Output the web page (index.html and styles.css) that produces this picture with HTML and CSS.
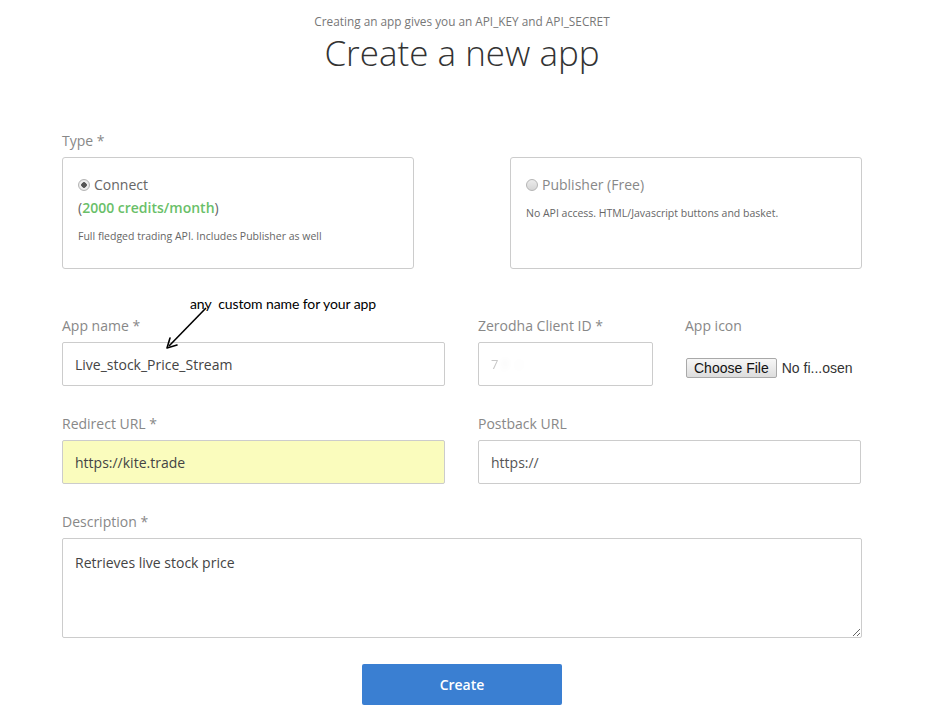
FILE: index.html
```html
<!DOCTYPE html>
<html>
<head>
<meta charset="utf-8">
<title>Create a new app</title>
<link rel="stylesheet" href="styles.css">
</head>
<body>
<main class="page">
  <p class="sub">Creating an app gives you an API_KEY and API_SECRET</p>
  <h1 class="title">Create a new app</h1>

  <form class="form">
    <div class="label">Type *</div>
    <div class="types">
      <div class="card">
        <div class="opt"><span class="radio checked"></span>Connect</div>
        <div class="credits">(<b>2000 credits/month</b>)</div>
        <p class="desc desc-connect">Full fledged trading API. Includes Publisher as well</p>
      </div>
      <div class="card">
        <div class="opt opt-off"><span class="radio"></span>Publisher (Free)</div>
        <p class="desc desc-pub">No API access. HTML/Javascript buttons and basket.</p>
      </div>
    </div>

    <div class="row">
      <div class="field">
        <div class="label">App name *</div>
        <input class="input" type="text" value="Live_stock_Price_Stream">
      </div>
      <div class="split">
        <div class="field">
          <div class="label">Zerodha Client ID *</div>
          <div class="input blurred"><span>7</span></div>
        </div>
        <div class="field">
          <div class="label">App icon</div>
          <div class="file">
            <span class="file-btn">Choose File</span>
            <span class="file-name">No fi...osen</span>
          </div>
        </div>
      </div>
    </div>

    <div class="row">
      <div class="field">
        <div class="label">Redirect URL *</div>
        <input class="input autofill" type="text" value="https://kite.trade">
      </div>
      <div class="field">
        <div class="label">Postback URL</div>
        <input class="input" type="text" placeholder="https://">
      </div>
    </div>

    <div class="field field-full">
      <div class="label">Description *</div>
      <textarea class="input area">Retrieves live stock price</textarea>
    </div>

    <div class="actions">
      <button type="button" class="btn">Create</button>
    </div>
  </form>

  <div class="note">any&nbsp; custom name for your app</div>
  <svg class="arrow" width="50" height="50" viewBox="0 0 50 50">
    <line x1="44" y1="3" x2="7" y2="41" stroke="#000" stroke-width="1.6"/>
    <path d="M5 43 L8 33 M5 43 L15 40" stroke="#000" stroke-width="1.6" fill="none" stroke-linecap="round"/>
  </svg>
</main>
</body>
</html>
```

FILE: styles.css
```css
* { box-sizing: border-box; }

html, body {
  margin: 0;
  padding: 0;
  background: #fff;
}

body {
  font-family: "Open Sans", "Liberation Sans", sans-serif;
  color: #444;
}

.page {
  position: relative;
  width: 800px;
  margin-left: 62px;
  padding-top: 13px;
}

.sub {
  margin: 0;
  text-align: center;
  font-size: 11.8px;
  line-height: 16px;
  color: #777;
}

.title {
  margin: 0;
  text-align: center;
  font-size: 35px;
  font-weight: 300;
  line-height: 48px;
  color: #333;
}

.form {
  margin-top: 54px;
}

.label {
  font-size: 14px;
  line-height: 20px;
  color: #888;
  margin-bottom: 6px;
}

.types {
  display: flex;
  justify-content: space-between;
}

.card {
  width: 352px;
  height: 112px;
  border: 1px solid #ccc;
  border-radius: 3px;
  padding: 17px 15px 0;
}

.opt {
  display: flex;
  align-items: center;
  font-size: 14px;
  line-height: 20px;
  color: #666;
}

.opt-off {
  color: #888;
}

.radio {
  width: 12px;
  height: 12px;
  border-radius: 50%;
  border: 1px solid #b5b5b5;
  background: linear-gradient(#ececec, #d6d6d6);
  margin-right: 4px;
  position: relative;
}

.radio.checked {
  background: radial-gradient(circle, #555 0 2.5px, #f2f2f2 3px, #dcdcdc 100%);
}

.credits {
  font-size: 14px;
  line-height: 20px;
  color: #666;
  margin-top: 3px;
}

.credits b {
  font-weight: 600;
  color: #6abf69;
}

.desc {
  margin: 0;
  font-size: 10.5px;
  line-height: 16px;
  color: #666;
}

.desc-connect { margin-top: 10px; }
.desc-pub { margin-top: 10px; }

.row {
  display: grid;
  grid-template-columns: 383px 383px;
  column-gap: 33px;
  margin-top: 47px;
}

.row + .row,
.row + .field-full {
  margin-top: 28px;
}

.split {
  display: grid;
  grid-template-columns: 175px 176px;
  column-gap: 32px;
}

.input {
  display: block;
  width: 100%;
  height: 44px;
  border: 1px solid #ccc;
  border-radius: 2px;
  padding: 0 12px;
  font-family: "Open Sans", "Liberation Sans", sans-serif;
  font-size: 14px;
  color: #444;
  background: #fff;
  outline: none;
}

.input::placeholder {
  color: #555;
}

.autofill {
  background: #fafcbd;
}

.blurred {
  display: flex;
  align-items: center;
}

.blurred span {
  color: #c8c8c8;
  font-size: 13px;
  filter: blur(0.6px);
  text-shadow: 10px 1px 6px #e8e8e8, 24px 2px 8px #eee;
}

.file {
  height: 44px;
  display: flex;
  align-items: center;
  padding-left: 1px;
  padding-top: 7px;
}

.file-btn {
  display: inline-block;
  height: 20px;
  line-height: 18px;
  padding: 0 7px;
  border: 1px solid #a9a9a9;
  border-radius: 2px;
  background: linear-gradient(#f7f7f7, #dddddd);
  font-family: "Liberation Sans", Arial, sans-serif;
  font-size: 14px;
  color: #111;
}

.file-name {
  margin-left: 5px;
  font-family: "Liberation Sans", Arial, sans-serif;
  font-size: 14px;
  color: #333;
}

.area {
  height: 100px;
  padding: 14px 12px;
  line-height: 20px;
  resize: vertical;
}

.actions {
  display: flex;
  justify-content: center;
  margin-top: 26px;
}

.btn {
  width: 200px;
  height: 41px;
  border: none;
  border-radius: 2px;
  background: #3a7fd2;
  color: #fff;
  font-family: "Open Sans", "Liberation Sans", sans-serif;
  font-size: 14px;
  font-weight: 600;
}

.note {
  position: absolute;
  left: 128px;
  top: 295px;
  font-family: "Lato", "Liberation Sans", sans-serif;
  font-size: 14px;
  line-height: 18px;
  color: #000;
  letter-spacing: -0.1px;
}

.arrow {
  position: absolute;
  left: 100px;
  top: 305px;
}
```
